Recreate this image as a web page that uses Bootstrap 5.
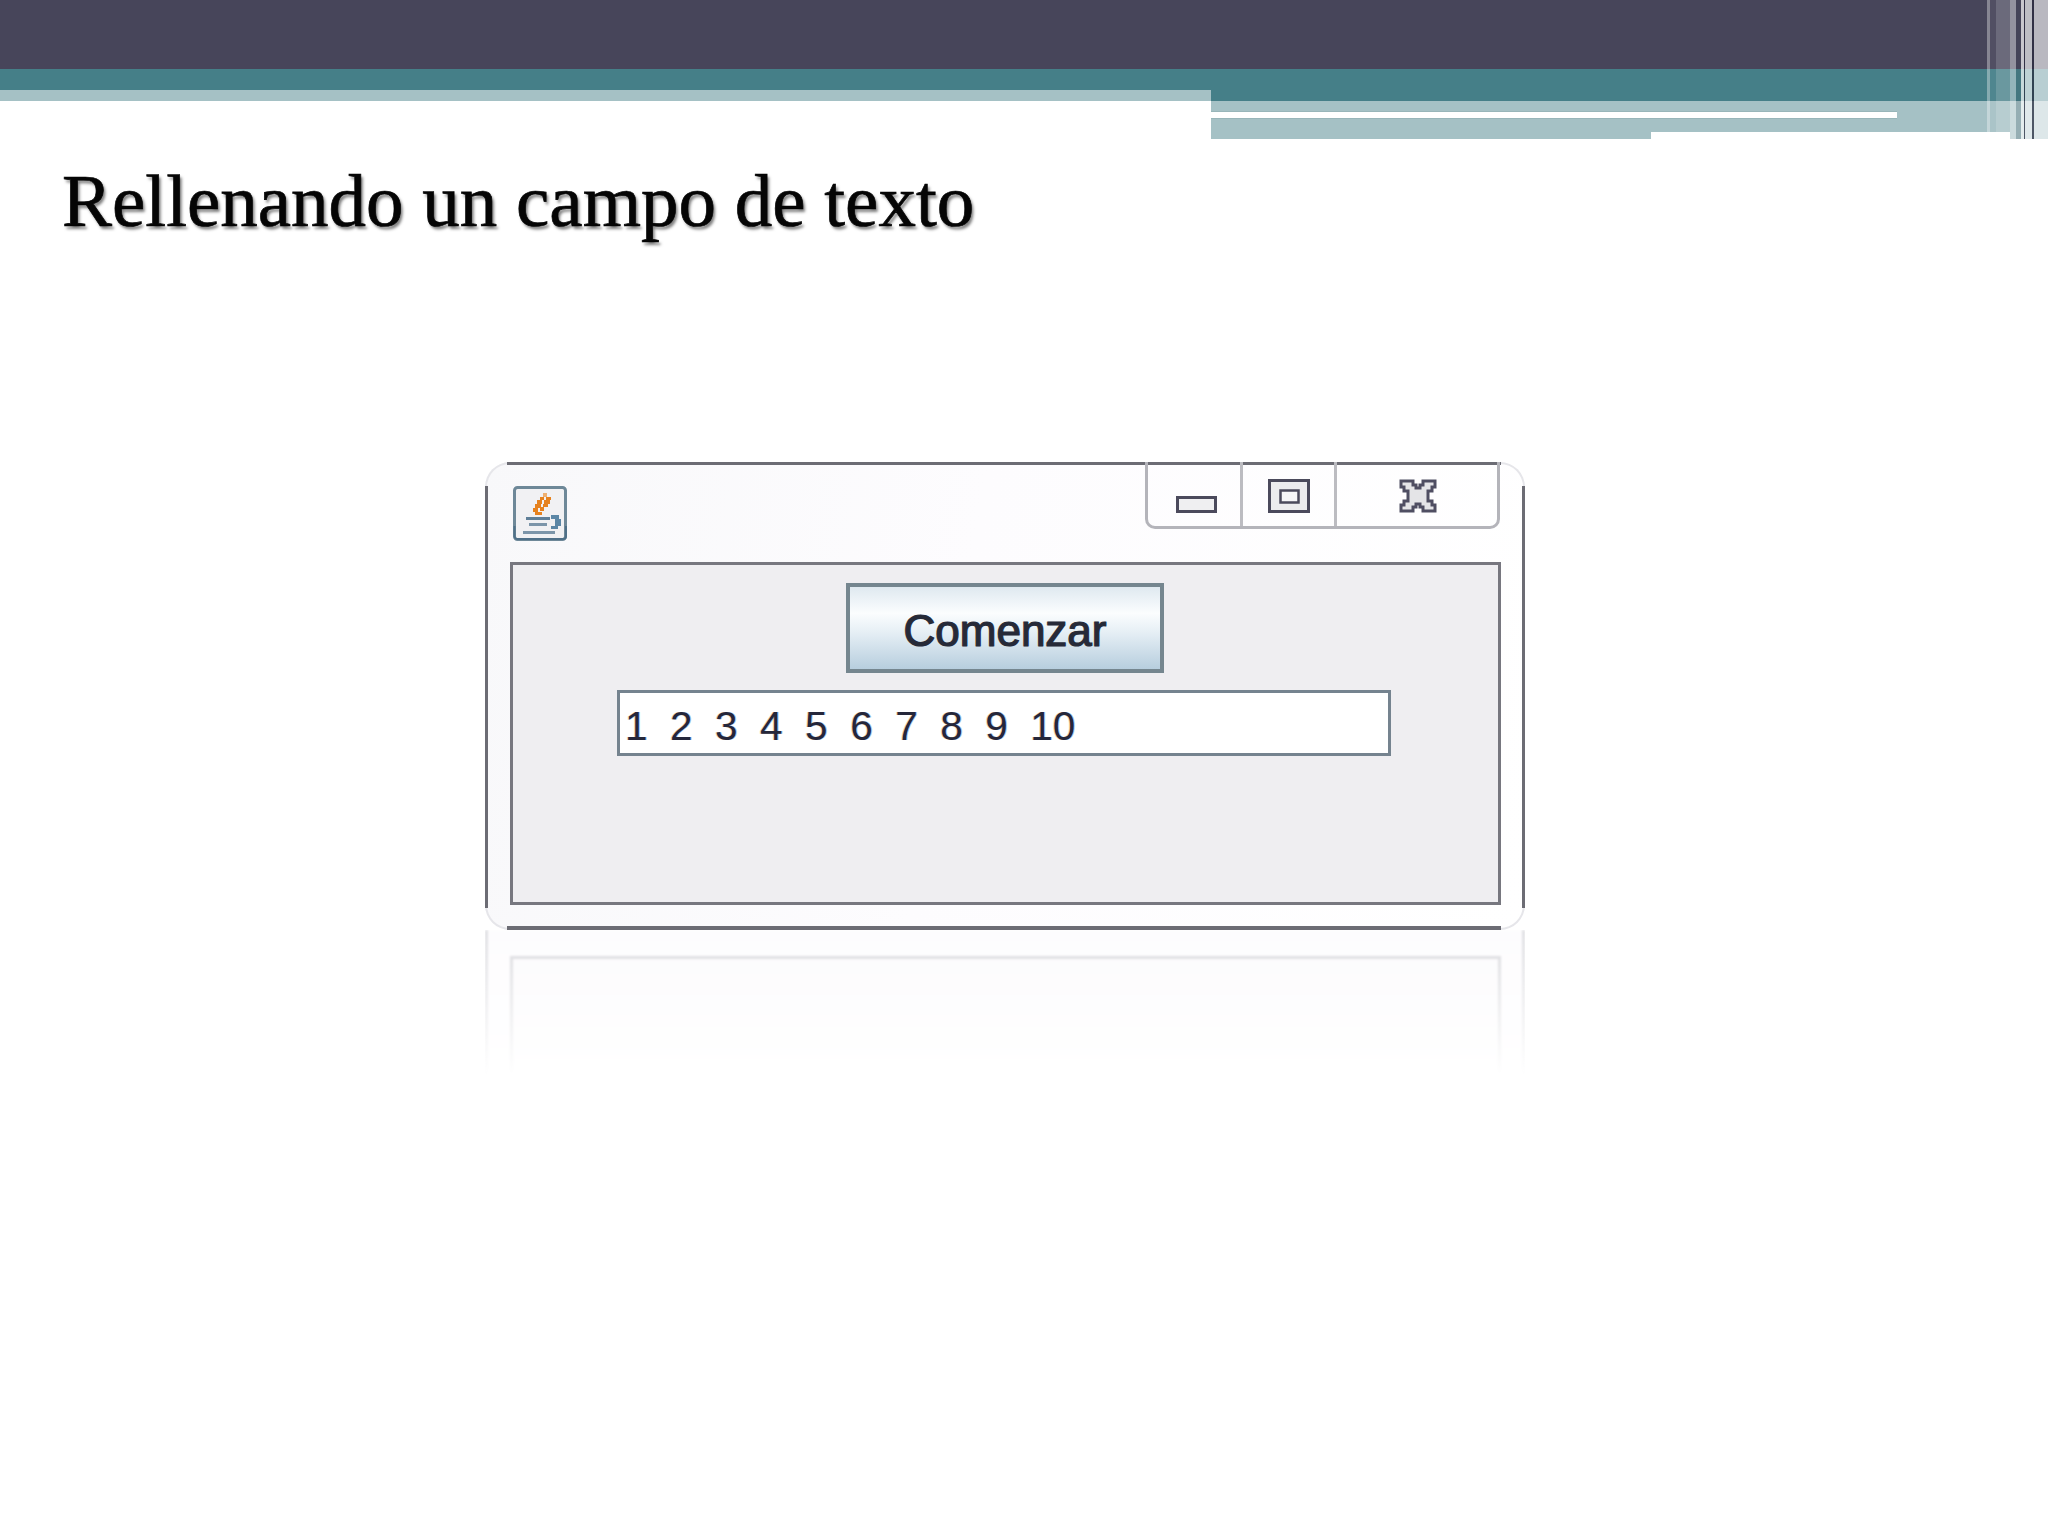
<!DOCTYPE html>
<html lang="es">
<head>
<meta charset="utf-8">
<title>Rellenando un campo de texto</title>
<link href="https://cdn.jsdelivr.net/npm/bootstrap@5.3.0/dist/css/bootstrap.min.css" rel="stylesheet">
<style>
html,body{background:#fff;margin:0;height:100%}
body{width:2048px;min-height:1536px;overflow:hidden}
.slide-head{height:139px;width:2048px}
.band-dark{height:69px;background:#47455a}
.band-left{width:1211px}
.band-right{width:837px;background:#a5c1c5}
.teal-a{height:21px;background:#457f88}
.teal-b{height:32px;background:#457f88}
.pale-a{height:11px;background:#a5c1c5}
.white-stripe{width:686px;height:8px;margin-top:10px;background:#fff;border-top:1px solid #98b5b9;border-bottom:1px solid #98b5b9}
.white-notch{width:359px;height:7px;margin:13px 0 0 440px;background:#fff}
.stripes{position:absolute;top:0;right:0;width:61px;height:139px}
.stripes i{display:block;height:139px}
.stripes i.short{height:132px}
.s1{width:3px;background:rgba(255,255,255,.35)}
.s2{width:6px;background:rgba(255,255,255,.06)}
.s3{width:14px;background:rgba(255,255,255,.2)}
.s4{width:6px;background:rgba(255,255,255,.42)}
.s5{width:5px;background:rgba(60,70,80,.15)}
.s6{width:3px;background:rgba(255,255,255,.7)}
.s7{width:1px;background:rgba(40,40,60,.7)}
.s8{width:7px;background:rgba(255,255,255,.65)}
.s9{width:2px;background:rgba(40,40,60,.7)}
.s10{width:14px;background:rgba(255,255,255,.62)}
.title-zone{height:323px;padding:24px 0 0 62px}
.slide-title{font-family:"Liberation Serif",serif;font-size:75px;line-height:1;font-weight:400;color:#050505;letter-spacing:0;margin:0;-webkit-text-stroke:.7px #050505;text-shadow:2px 3px 3px rgba(0,0,0,.5);white-space:nowrap}
.jwin{position:relative;width:1040px;height:468px;margin-left:485px;border-radius:25px;background:linear-gradient(100deg,#f8f8fa 0%,#fdfcfe 45%,#fff 100%);box-shadow:inset 0 0 0 2px #e6e6ea;padding:0 24.5px 25px}
.jwin::before{content:"";position:absolute;left:22px;right:24px;top:0;bottom:0;border-top:3px solid #6c6c74;border-bottom:4px solid #6c6c74;pointer-events:none}
.jwin::after{content:"";position:absolute;left:0;right:0;top:24px;bottom:22px;border-left:3px solid #6c6c74;border-right:3px solid #6c6c74;pointer-events:none}
.jbar{height:100px}
.jicon{width:54px;height:55px;margin:24px 0 0 3px;display:block}
.jctrl{position:relative;z-index:1;width:355px;height:67px;margin-right:1px;border:solid #b4b4ba;border-width:0 3px 3px 3px;border-radius:0 0 10px 10px}
.jcell{height:100%;border-right:3px solid #bcbcc1}
.jcell:nth-child(1){width:95px;padding:34px 0 0 28px}
.jcell:nth-child(2){width:94px;padding:17px 0 0 25px}
.jcell:nth-child(3){border-right:0;flex:1;padding:17px 0 0 62px}
.jcell svg{display:block}
.jpanel{height:343px;border:3px solid #77777f;background:#efeef1;padding-top:18px}
.jbtn{width:318px;height:90px;border:4px solid #75868f;border-radius:0;padding:5px 0 0;background:linear-gradient(180deg,#dfe9f0 0%,#fbfdfe 32%,#e6eff5 55%,#b7cede 100%);font-family:"Liberation Sans",Arial,sans-serif;font-weight:400;font-size:44px;line-height:1;color:#262a38;-webkit-text-stroke:1.2px #262a38;text-shadow:-1px 0 rgba(190,140,60,.35),1px 0 rgba(50,110,180,.35)}
.jfield{width:774px;height:66px;margin:17px 2px 0 0;border:3px solid #75838f;background:#fff;padding:10px 0 0 5px;font-family:"Liberation Sans",Arial,sans-serif;font-size:40.5px;line-height:46px;color:#25273a;white-space:pre;text-shadow:-1px 0 rgba(210,150,60,.4),1px 0 rgba(60,120,200,.4)}
.jmirror{width:1040px;height:145px;margin-left:485px;padding:26px 24.5px 0;border:solid #dcdce0;border-width:0 3px;-webkit-mask-image:linear-gradient(180deg,rgba(0,0,0,.9),rgba(0,0,0,0));mask-image:linear-gradient(180deg,rgba(0,0,0,.9),rgba(0,0,0,0));background:#fdfcfe;filter:blur(.8px)}
.jmirror-in{height:119px;margin:0 -3px;border:solid #d6d6da;border-width:3px 3px 0;background:#fbfafc}
</style>
</head>
<body>
<header class="slide-head position-relative">
  <div class="band-dark"></div>
  <div class="d-flex">
    <div class="band-left"><div class="teal-a"></div><div class="pale-a"></div></div>
    <div class="band-right">
      <div class="teal-b"></div>
      <div class="white-stripe"></div>
      <div class="white-notch"></div>
    </div>
  </div>
  <div class="stripes d-flex">
    <i class="s1 short"></i><i class="s2 short"></i><i class="s3 short"></i><i class="s4"></i><i class="s5"></i><i class="s6"></i><i class="s7"></i><i class="s8"></i><i class="s9"></i><i class="s10"></i>
  </div>
</header>
<main>
  <div class="title-zone"><h1 class="slide-title">Rellenando un campo de texto</h1></div>
  <section class="jwin">
    <div class="jbar d-flex justify-content-between align-items-start">
      <svg class="jicon" viewBox="0 0 54 55" aria-hidden="true">
        <rect x="1.5" y="1.5" width="51" height="52" rx="3" fill="#f1f1f3" stroke="#6e8898" stroke-width="3"/>
        <path d="M1.5 40V50a3 3 0 0 0 3 3H50a3 3 0 0 0 3-3V40" fill="none" stroke="#4f7088" stroke-width="2"/>
        <g fill="#e6821f">
          <rect x="30" y="7" width="4" height="4" fill="#efb070"/>
          <rect x="27" y="11" width="4" height="3"/><rect x="33" y="11" width="5" height="3"/><rect x="24" y="14" width="5" height="4"/><rect x="31" y="14" width="6" height="4"/>
          <rect x="22" y="18" width="6" height="4"/><rect x="30" y="18" width="5" height="3"/><rect x="20" y="22" width="5" height="4"/><rect x="27" y="21" width="4" height="4"/><rect x="22" y="26" width="7" height="3"/>
        </g>
        <rect x="13" y="31" width="24" height="3" fill="#5f7f98"/>
        <rect x="16" y="37" width="18" height="3" fill="#7c95a9"/>
        <path d="M38 29h8v4h2v7h-3v3h-7v-3h4v-7h-4z" fill="#5b86a5"/>
        <rect x="10" y="45" width="32" height="3" fill="#7c95a9"/>
      </svg>
      <div class="jctrl d-flex">
        <div class="jcell"><svg width="41" height="17" viewBox="0 0 41 17" aria-hidden="true"><rect x="1.5" y="1.5" width="38" height="14" fill="#efeff1" stroke="#4b4a5c" stroke-width="3"/></svg></div>
        <div class="jcell"><svg width="42" height="34" viewBox="0 0 42 34" aria-hidden="true"><rect x="1.5" y="1.5" width="39" height="31" fill="#ececee" stroke="#4b4a5c" stroke-width="3"/><rect x="12.5" y="11.5" width="18" height="12" fill="#f6f6f8" stroke="#4b4a5c" stroke-width="2.5"/></svg></div>
        <div class="jcell"><svg width="38" height="34" viewBox="0 0 38 34" aria-hidden="true"><path d="M2 2H14V6H17V9H21V6H24V2H36V8H33V12H29V22H33V26H36V32H24V28H21V25H17V28H14V32H2V26H5V22H9V12H5V8H2Z" fill="#e4e4e7" stroke="#4f4e62" stroke-width="3"/></svg></div>
      </div>
    </div>
    <div class="jpanel d-flex flex-column align-items-center">
      <button type="button" class="btn jbtn">Comenzar</button>
      <div class="jfield">1  2  3  4  5  6  7  8  9  10</div>
    </div>
  </section>
  <div class="jmirror"><div class="jmirror-in"></div></div>
</main>
<script src="https://cdn.jsdelivr.net/npm/bootstrap@5.3.0/dist/js/bootstrap.bundle.min.js"></script>
</body>
</html>
